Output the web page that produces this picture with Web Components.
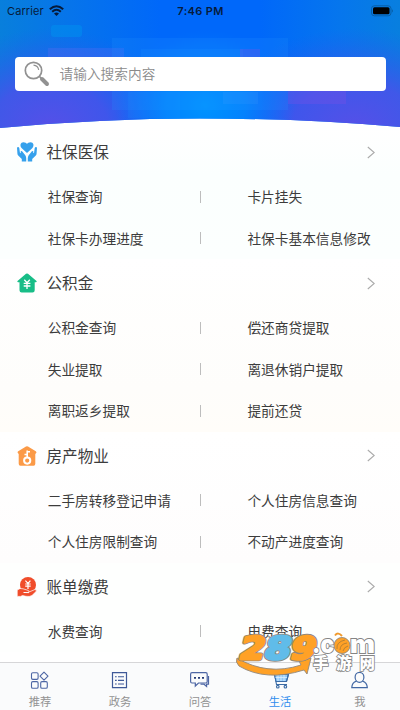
<!DOCTYPE html>
<html lang="zh-CN">
<head>
<meta charset="utf-8">
<title>生活</title>
<style>
html,body{margin:0;height:100%}
body{font-family:"Noto Sans CJK SC",sans-serif;background:#fff;color:#3c3c3c;overflow:hidden}
</style>
</head>
<body>
<life-app></life-app>
<script>
const define = (name, html) => customElements.define(name, class extends HTMLElement {
  connectedCallback() {
    if (this.shadowRoot) return;
    const t = document.createElement('template');
    t.innerHTML = typeof html === 'function' ? html(this) : html;
    this.attachShadow({mode: 'open'}).append(t.content.cloneNode(true));
  }
});

const icons = {
  care: `<svg viewBox="0 0 20 20" fill="#36a1ec"><path d="M10 11 4.800 6.300C2.400 3.500 3.600 .3 6.400.3 8.200.3 9.300 1 10 2 10.700 1 11.800.3 13.600.3 16.400 .3 17.600 3.500 15.200 6.300Z"/><path d="M0 5.500Q1.500 4.200 2.300 6L2.900 10.500 4 11.200 3.600 9.400Q4.700 8.500 5.700 9.900L8.300 13.200Q9.200 14.600 9.200 16.300V19.500H4.800V16.900L1.200 13.500Q.5 12.800.4 11.500Z"/><path d="M20 5.500Q18.500 4.200 17.700 6L17.100 10.500 16 11.200 16.400 9.400Q15.300 8.500 14.300 9.900L11.700 13.200Q10.800 14.600 10.800 16.300V19.500H15.200V16.900L18.800 13.500Q19.500 12.800 19.600 11.500Z"/></svg>`,
  fund: `<svg viewBox="0 0 20 20"><path d="M9 .8Q10 0 11 .8L19.500 8Q20.200 9 19 9.200H17.700V17.300Q17.700 19.500 15.500 19.500H4.700Q2.500 19.500 2.500 17.300V9.200H1Q-.2 9 .5 8Z" fill="#18bd87"/><path d="M7.300 6.800 10 9.700 12.800 6.800M6.700 10.400H13.400M6.700 13H13.400M10 9.700V16" fill="none" stroke="#fff" stroke-width="1.300"/></svg>`,
  house: `<svg viewBox="0 0 20 20"><path d="M9 .5Q10 -.1 11 .5L18.800 5.300Q20 6.300 19.200 7.100L18.300 8V17.800Q18.300 19.800 16.600 19.800H3.400Q1.700 19.800 1.700 17.800V8L.8 7.100Q.1 6.100 1.200 5.300Z" fill="#fb9a47"/><circle cx="10.200" cy="14.600" r="3.100" fill="none" stroke="#fff" stroke-width="2"/><path d="M10.200 11.500V4.500M10.500 5.800H13M7.500 8.500H10" fill="none" stroke="#fff" stroke-width="1.600"/></svg>`,
  bill: `<svg viewBox="0 0 20 20"><circle cx="11" cy="8" r="8" fill="#f04d2b"/><path d="M8.400 3.600 11 6.300 13.400 3.600M8.200 7H13.700M8.200 9.200H13.700M11 6.500V12" fill="none" stroke="#fff" stroke-width="1.200"/><path d="M.2 13Q3 10.600 6 11.800L10 13Q12.500 13.500 12 15L17.800 12.600Q20.500 12.700 19.100 14.500L15 18.500Q12.500 20 9 19.300L5.500 18.600 3.500 19.400H.2Z" fill="#f04d2b" stroke="#fff" stroke-width=".7"/><path d="M6.500 15.500 12 15.600" stroke="#fff"/></svg>`,
  grid: `<svg viewBox="0 0 20 20" fill="none" stroke="#4d66a4" stroke-width="1.100"><rect x="1.500" y="2.800" width="6.600" height="6.600" rx="1.300"/><rect x="1.500" y="11.600" width="6.600" height="6.600" rx="1.300"/><rect x="10.700" y="11.600" width="6.600" height="6.600" rx="1.300"/><path d="M14 2.200 18 6.200 14 10.200 10 6.200Z" stroke-linejoin="round"/></svg>`,
  list: `<svg viewBox="0 0 20 20" fill="none" stroke="#3f5998" stroke-width="1.200"><path d="M2.500 2.600H16.500V17.600H2.500Z"/><path d="M5 6.800H6.700M8 6.800H14M5 10.400H6.700M8 10.400H14M5 14H6.700M8 14H14" stroke-width="1.100"/></svg>`,
  chat: `<svg viewBox="0 0 20 20" fill="none" stroke="#4d66a4" stroke-width="1.200"><path d="M2 2.700H15.800Q17.200 2.700 17.200 4.200V11.500Q17.200 13 15.800 13H8.500L5.300 16V13H2Q.6 13 .6 11.500V4.200Q.6 2.700 2 2.700Z"/><path d="M18.500 6V14.200H16.600V16.500L14 14.200H10.500"/><path d="M4 7.900H6M8 7.900H10M12 7.900H14" stroke="#263c77" stroke-width="1.900"/></svg>`,
  cart: `<svg viewBox="0 0 20 20" fill="none" stroke="#3b6ba5" stroke-width="1.100"><path d="M1.200 1.500H4L6.500 14.500H17"/><path d="M4.500 4.200H18.500L16.500 11.500H6Z" fill="#91cafa"/><path d="M8 5V11M11 5V11M14 5V11M5.500 7.500H17.500" stroke="#ddf0ff" stroke-width=".8"/><path d="M4.500 4.200H18.500L16.500 11.500H6"/><circle cx="7.800" cy="16.700" r="1.300"/><circle cx="15.400" cy="16.700" r="1.300"/></svg>`,
  user: `<svg viewBox="0 0 20 20" fill="none" stroke="#4268a4" stroke-width="1.200"><ellipse cx="9.500" cy="7.300" rx="4.400" ry="5"/><path d="M6.500 11.200Q2 12.500 1.800 17.600H17.300Q17 12.500 12.500 11.200"/></svg>`
};

define('ui-icon', el => `<style>:host{display:block;width:20px;height:20px;flex:none}svg{display:block;width:100%;height:100%;overflow:visible}</style>${icons[el.getAttribute('name')]}`);

define('status-bar', `<style>
:host{display:grid;grid-template-columns:1fr auto 1fr;align-items:center;height:21px;padding:0 6px 0 7px;font:11px Inter,sans-serif;color:#061b3b}
.l{display:flex;align-items:center;gap:5px;letter-spacing:.1px}.t{font-weight:600;letter-spacing:.35px}.r{justify-self:end;display:flex}svg{display:block}
</style><div class="l"><span>Carrier</span><svg width="15" height="11" viewBox="0 0 15 11"><g fill="none" stroke="#061b3b" stroke-width="2"><path d="M.8 4.300Q7.500-1.900 14.200 4.300M3.200 6.800Q7.500 2.800 11.800 6.800"/></g><path d="M5 8.400Q7.500 6.500 10 8.400L7.500 11Z" fill="#061b3b"/></svg></div><span class="t">7:46 PM</span>
<div class="r"><svg width="23" height="12" viewBox="0 0 23 12"><rect x=".5" y=".8" width="19.500" height="10" rx="2.800" fill="none" stroke="#075fa8"/><rect x="2" y="2.300" width="16.500" height="7" rx="1.500" fill="#000"/><path d="M21 4.200Q23 5.800 21 7.400Z" fill="#075fa8"/></svg></div>`);

define('search-box', `<style>
:host{display:flex;align-items:center;gap:9.500px;height:34px;margin:35.500px 14.500px 0 15px;padding-left:9px;background:#fff;border-radius:4px;font-size:13.700px;color:#8b8b8b;font-weight:350}
svg{display:block}span{padding-bottom:2px}
</style><svg width="26" height="26" viewBox="0 0 26 26" fill="none" stroke="#919191"><circle cx="9.500" cy="9.500" r="8.200" stroke-width="1.700"/><path d="M9.500 4.200Q14 4.700 14.700 9" stroke-width="1.200"/><path d="M15.500 15.500 18 18" stroke-width="1.700"/><path d="M18 18 23 23" stroke-width="4" stroke-linecap="round"/></svg><span><slot></slot></span>`);

define('top-banner', `<style>
:host{display:grid;height:128px;flex:none}
.bg,.c{grid-area:1/1}.bg{display:block;width:100%;height:128px}.c{min-width:0}
</style><svg class="bg" viewBox="0 0 400 128" preserveAspectRatio="none">
<defs>
<linearGradient id="h"><stop stop-color="#087fdc"/><stop offset=".18" stop-color="#0674eb"/><stop offset=".4" stop-color="#0068fa"/><stop offset=".65" stop-color="#0068fa"/><stop offset=".85" stop-color="#0676ed"/><stop offset="1" stop-color="#087fdf"/></linearGradient>
<radialGradient id="m" gradientUnits="userSpaceOnUse" cx="0" cy="0" r="1" gradientTransform="translate(205 105) scale(90 75)"><stop stop-color="#0094ff"/><stop offset=".45" stop-color="#008cff" stop-opacity=".75"/><stop offset="1" stop-color="#007aff" stop-opacity="0"/></radialGradient>
<radialGradient id="a" gradientUnits="userSpaceOnUse" cx="0" cy="0" r="1" gradientTransform="translate(50 128) scale(130 100)"><stop stop-color="#5550e8"/><stop offset=".45" stop-color="#4a51ea" stop-opacity=".85"/><stop offset="1" stop-color="#245bf0" stop-opacity="0"/></radialGradient>
<radialGradient id="b" gradientUnits="userSpaceOnUse" cx="0" cy="0" r="1" gradientTransform="translate(355 128) scale(140 100)"><stop stop-color="#5550e8"/><stop offset=".45" stop-color="#4a51ea" stop-opacity=".85"/><stop offset="1" stop-color="#245bf0" stop-opacity="0"/></radialGradient>
<clipPath id="k"><path d="M0 0H400V127Q300 118.500 200 118.500T0 128Z"/></clipPath>
</defs>
<g clip-path="url(#k)"><path fill="url(#h)" d="M0 0H400V128H0Z"/><path fill="url(#a)" d="M0 0H400V128H0Z"/><path fill="url(#b)" d="M0 0H400V128H0Z"/><path fill="url(#m)" d="M0 0H400V128H0Z"/>
<rect x="51" y="25" width="31" height="12" rx="3" fill="#0094ef" opacity=".45"/>
<path d="M48 48H124V57H48Z" fill="#6a6cf2" opacity=".25"/><path d="M112 38H288V110H112Z" fill="#2898ff" opacity=".18"/><path d="M128 92H180V118H128ZM141 49H243V57H141Z" fill="#249bff" opacity=".14"/><path d="M240 49H260V57H240ZM288 91H346V104H288Z" fill="#8050e6" opacity=".3"/><path d="M223 92H258V104H223Z" fill="#55a1ff" opacity=".14"/></g>
</svg><div class="c"><status-bar></status-bar><search-box>请输入搜索内容</search-box></div>`);

define('service-link', `<style>
:host{display:flex;align-items:center;height:41.500px;font-size:13.700px;line-height:20px;padding-left:47.700px;box-sizing:border-box;white-space:nowrap}
i{width:1px;height:12px;background:#bdbdbd;margin-left:auto;display:none}:host([bar]) i{display:block}span{padding-bottom:1.500px}
</style><span><slot></slot></span><i></i>`);

define('service-section', el => `<style>
:host{display:block;background:var(--tint,#fff);flex:none}
header{display:flex;align-items:center;height:48px;padding:0 25px 0 16.500px;gap:10px}
h2{margin:0;font-size:15.600px;font-weight:400;line-height:22px;flex:1;padding-bottom:2px}
.grid{display:grid;grid-template-columns:201px 199px}
::slotted(:nth-child(even)){margin-left:-1.300px}
svg{display:block}
</style><header><ui-icon name="${el.getAttribute('icon')}"></ui-icon><h2>${el.getAttribute('heading')}</h2><svg width="8" height="13" viewBox="0 0 8 13"><path d="M.8 1 7.200 6.500.8 12" fill="none" stroke="#aaa" stroke-width="1.100"/></svg></header><div class="grid"><slot></slot></div>`);

define('tab-item', el => `<style>
:host{display:flex;flex-direction:column;align-items:center;flex:1;padding-top:7px;font-size:11.300px;line-height:16px;color:#929292}
:host([active]){color:#2e8ded}span{margin-top:3px}
</style><ui-icon name="${el.getAttribute('icon')}"></ui-icon><span><slot></slot></span>`);

define('tab-bar', `<style>
:host{display:flex;position:absolute;left:0;right:0;bottom:0;height:48px;background:#fafbfc;border-top:1px solid #d6d6d8;box-sizing:border-box}
</style><slot></slot>`);

define('site-mark', `<style>:host{display:block;position:absolute;left:232px;top:630px;width:146px;height:46px}svg{display:block;overflow:visible}</style>
<svg width="146" height="46" viewBox="0 0 146 46">
<path d="M5 28Q35 46 69 35L67 31 79 28 75 44 72 40Q34 52 7 36Q3 32 5 28Z" fill="#ffa126" stroke="#91887d" stroke-width=".9"/>
<g font-family="'DejaVu Sans',sans-serif" font-weight="700" stroke-linejoin="round" paint-order="stroke">
<g transform="skewX(-14)" font-size="31" stroke-width="4.500"><text x="13" y="29" textLength="25" lengthAdjust="spacingAndGlyphs" fill="#ffa126" stroke="#91887d">2</text><text x="64" y="29" textLength="25" lengthAdjust="spacingAndGlyphs" fill="#ffa126" stroke="#91887d">9</text><text x="38" y="29" textLength="26" lengthAdjust="spacingAndGlyphs" fill="#60bce9" stroke="#91887d">8</text>
<g stroke-width="2.800"><text x="13" y="29" textLength="25" lengthAdjust="spacingAndGlyphs" fill="#ffa126" stroke="#ffa126">2</text><text x="64" y="29" textLength="25" lengthAdjust="spacingAndGlyphs" fill="#ffa126" stroke="#ffa126">9</text><text x="38" y="29" textLength="26" lengthAdjust="spacingAndGlyphs" fill="#60bce9" stroke="#60bce9">8</text></g></g></g>
<g font-family="Inter,sans-serif" font-weight="900" font-size="25" fill="#fff" stroke="#858585" stroke-width="1.800" paint-order="stroke"><text x="80" y="22.500" textLength="22" lengthAdjust="spacingAndGlyphs">.c</text><text x="118" y="22.500" textLength="25" lengthAdjust="spacingAndGlyphs">m</text></g>
<circle cx="110" cy="15.500" r="8" fill="#ffa126" stroke="#91887d" stroke-width=".9"/><path d="M103 5.500Q106 1.500 110 6" fill="none" stroke="#f09a2d" stroke-width="2"/><path d="M105 19Q104 12 113 10M108 20Q108 14 115 13M111 21Q112 17 116 16" stroke="#a97a35" fill="none" stroke-width=".8"/>
<text x="81" y="39" font-family="Noto Sans CJK SC,sans-serif" font-weight="900" font-size="15.500" textLength="62" fill="#fff" stroke="#858585" stroke-width="1.600" paint-order="stroke">手游网</text>
</svg>`);

const groups = [
  ['care', '社保医保', 'linear-gradient(#fff,#fbfffe 35%,#fcfffe)', ['社保查询', '卡片挂失', '社保卡办理进度', '社保卡基本信息修改']],
  ['fund', '公积金', 'linear-gradient(#fff,#fefdfb 75%,#fffdf9)', ['公积金查询', '偿还商贷提取', '失业提取', '离退休销户提取', '离职返乡提取', '提前还贷']],
  ['house', '房产物业', 'linear-gradient(#fff,#fefdfd)', ['二手房转移登记申请', '个人住房信息查询', '个人住房限制查询', '不动产进度查询']],
  ['bill', '账单缴费', '#fefffe', ['水费查询', '电费查询']]
];
const tabs = [['grid', '推荐'], ['list', '政务'], ['chat', '问答'], ['cart', '生活'], ['user', '我']];

define('life-app', `<style>
:host{display:flex;flex-direction:column;position:relative;width:400px;height:710px;overflow:hidden;background:#fff}
</style><top-banner></top-banner>
${groups.map(([icon, title, tint, links]) => `<service-section icon="${icon}" heading="${title}" style="--tint:${tint}">${links.map((x, i) => `<service-link${i % 2 ? '' : ' bar'}>${x}</service-link>`).join('')}</service-section>`).join('')}
<tab-bar>${tabs.map(([icon, label]) => `<tab-item icon="${icon}"${icon === 'cart' ? ' active' : ''}>${label}</tab-item>`).join('')}</tab-bar><site-mark></site-mark>`);
</script>
</body>
</html>
